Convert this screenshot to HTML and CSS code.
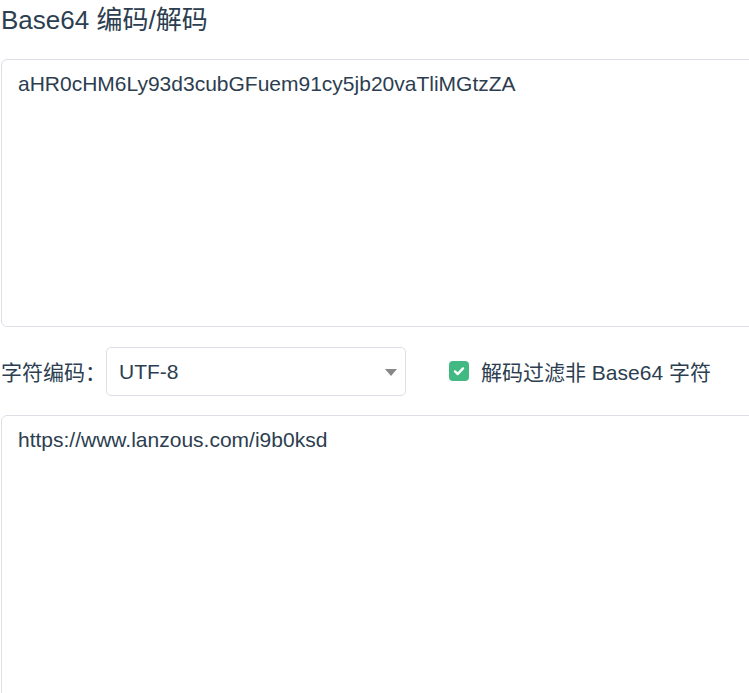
FILE: index.html
```html
<!DOCTYPE html>
<html lang="zh-CN">
<head>
    <meta charset="UTF-8">
    <meta name="viewport" content="width=device-width, initial-scale=1.0">
    <title>Base64 编码/解码</title>
    <link rel="stylesheet" href="styles.css">
</head>
<body>

<div class="page">
    <h1 class="title">Base64 编码/解码</h1>

    <!-- Encoded input -->
    <textarea class="box box-input">aHR0cHM6Ly93d3cubGFuem91cy5jb20vaTliMGtzZA</textarea>

    <!-- Options -->
    <div class="options">
        <label class="charset">
            <span>字符编码：</span>
            <span class="select">
                <span class="select-value">UTF-8</span>
                <span class="select-arrow"></span>
            </span>
        </label>
        <label class="filter">
            <span class="check">
                <svg width="14" height="14" viewBox="0 0 14 14">
                    <path d="M3 7.4 L5.8 10 L11 4.4" fill="none" stroke="#fff" stroke-width="2.4" stroke-linecap="round" stroke-linejoin="round"/>
                </svg>
            </span>
            <span>解码过滤非 Base64 字符</span>
        </label>
    </div>

    <!-- Decoded output -->
    <textarea class="box box-output">https://www.lanzous.com/i9b0ksd</textarea>
</div>

</body>
</html>
```

FILE: styles.css
```css
body {
    margin: 0;
    padding: 0;
    font-family: "Liberation Sans", Arial, "Noto Sans CJK SC", sans-serif;
    color: #2c3e50;
    background: #fff;
    overflow: hidden;
}

.page {
    width: 780px;
    padding-left: 1px;
}

.title {
    margin: 0;
    padding-top: 4px;
    font-size: 26px;
    font-weight: normal;
    line-height: 32px;
}

/* Text boxes */
.box {
    display: block;
    box-sizing: border-box;
    width: 780px;
    margin: 0;
    padding: 8px 16px;
    border: 1px solid #dcdfe6;
    border-radius: 6px;
    font-family: inherit;
    font-size: 21px;
    line-height: 32px;
    color: #2c3e50;
    resize: none;
    outline: none;
}

.box-input {
    margin-top: 23px;
    height: 268px;
}

.box-output {
    height: 320px;
}

/* Options row */
.options {
    display: flex;
    align-items: center;
    height: 88px;
    font-size: 21px;
}

.charset {
    display: flex;
    align-items: center;
}

.select {
    display: flex;
    align-items: center;
    justify-content: space-between;
    box-sizing: border-box;
    width: 300px;
    height: 49px;
    padding: 2px 8px 0 12px;
    border: 1px solid #dcdfe6;
    border-radius: 5px;
}

.select-arrow {
    width: 0;
    height: 0;
    border-left: 6px solid transparent;
    border-right: 6px solid transparent;
    border-top: 7px solid #888;
}

.filter {
    display: flex;
    align-items: center;
    margin-left: 43px;
}

.check {
    display: flex;
    align-items: center;
    justify-content: center;
    width: 20px;
    height: 20px;
    margin-right: 12px;
    border-radius: 4px;
    background-color: #42b983;
}
```
